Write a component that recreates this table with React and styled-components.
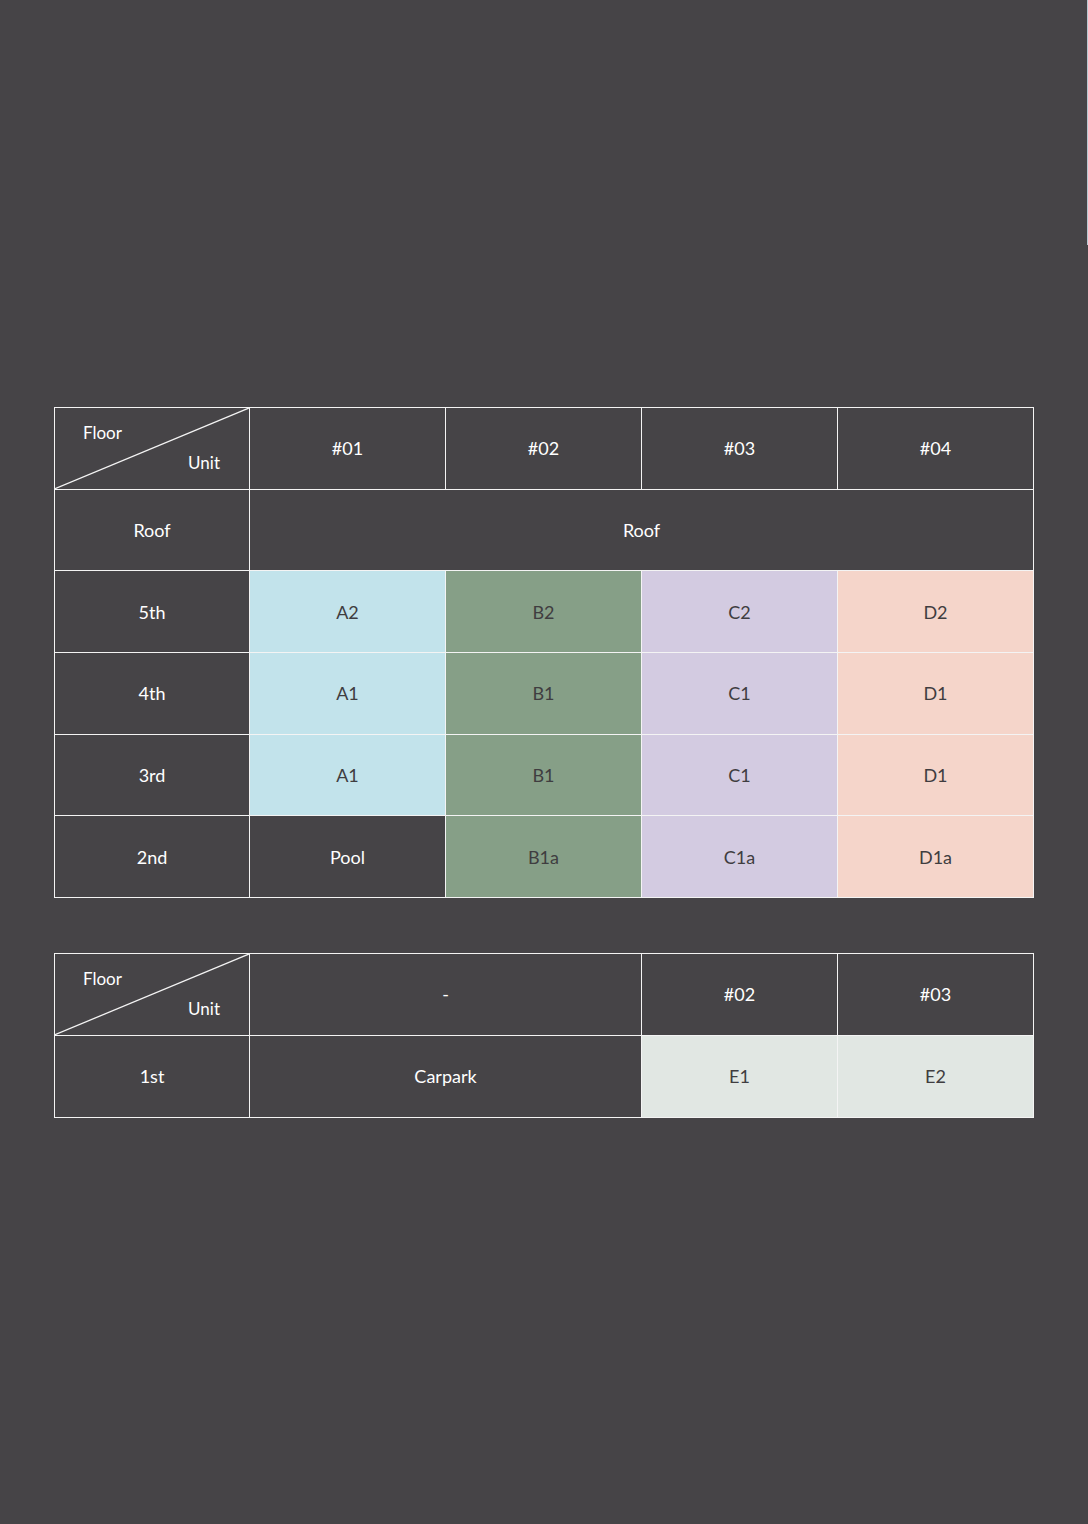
import styled, {createGlobalStyle} from "styled-components";

const colors = {
    bg: '#464447',
    line: '#f4f4f4',
    white: '#ffffff',
    ink: '#3f3d40',
    a: '#c2e3eb',
    b: '#869f87',
    c: '#d3cbe1',
    d: '#f5d5ca',
    e: '#e1e7e3',
}

const GlobalStyle = createGlobalStyle`
  html, body {
    margin: 0;
    padding: 0;
    background: ${colors.bg};
  }
  body {
    font-family: Lato, "Open Sans", sans-serif;
  }
`

const Page = styled.div`
  position: relative;
  min-height: 1524px;
  padding: 407px 54px 0 54px;
  box-sizing: border-box;
  background: ${colors.bg};
`

const EdgeLine = styled.div`
  position: absolute;
  top: 0;
  right: 0;
  width: 1px;
  height: 245px;
  background: #b9c9d2;
`

const Table = styled.table`
  width: 980px;
  border-collapse: collapse;
  table-layout: fixed;
  margin-bottom: ${p => p.$gap || 0}px;
`

const FirstCol = styled.col`
  width: 195px;
`

const Cell = styled.td`
  height: 80.7px;
  padding: 0;
  border: 1px solid ${colors.line};
  text-align: center;
  vertical-align: middle;
  font-size: 18px;
  color: ${p => p.$tone ? colors.ink : colors.white};
  background: ${p => p.$tone ? colors[p.$tone] : 'transparent'};
`

const CornerCell = styled.td`
  position: relative;
  height: 80.7px;
  padding: 0;
  border: 1px solid ${colors.line};
  font-size: 17px;
  color: ${colors.white};
`

const Diagonal = styled.svg`
  position: absolute;
  inset: 0;
  width: 100%;
  height: 100%;
`

const FloorLabel = styled.span`
  position: absolute;
  left: 28px;
  top: 14px;
`

const UnitLabel = styled.span`
  position: absolute;
  right: 29px;
  bottom: 16px;
`

const Corner = () => (
    <CornerCell>
        <Diagonal viewBox="0 0 100 100" preserveAspectRatio="none">
            <line x1="0" y1="100" x2="100" y2="0" stroke={colors.line} strokeWidth="1.3" vectorEffect="non-scaling-stroke"/>
        </Diagonal>
        <FloorLabel>Floor</FloorLabel>
        <UnitLabel>Unit</UnitLabel>
    </CornerCell>
)

const upperFloors = [
    {floor: '5th', units: [['A2', 'a'], ['B2', 'b'], ['C2', 'c'], ['D2', 'd']]},
    {floor: '4th', units: [['A1', 'a'], ['B1', 'b'], ['C1', 'c'], ['D1', 'd']]},
    {floor: '3rd', units: [['A1', 'a'], ['B1', 'b'], ['C1', 'c'], ['D1', 'd']]},
    {floor: '2nd', units: [['Pool', null], ['B1a', 'b'], ['C1a', 'c'], ['D1a', 'd']]},
]

const App = () => {
    return (
        <Page>
            <GlobalStyle/>
            <EdgeLine/>
            <Table $gap={55}>
                <colgroup>
                    <FirstCol/>
                    <col/><col/><col/><col/>
                </colgroup>
                <tbody>
                <tr>
                    <Corner/>
                    {['#01', '#02', '#03', '#04'].map(u => <Cell key={u}>{u}</Cell>)}
                </tr>
                <tr>
                    <Cell>Roof</Cell>
                    <Cell colSpan={4}>Roof</Cell>
                </tr>
                {upperFloors.map(row => (
                    <tr key={row.floor}>
                        <Cell>{row.floor}</Cell>
                        {row.units.map(([name, tone], i) => (
                            <Cell key={i} $tone={tone}>{name}</Cell>
                        ))}
                    </tr>
                ))}
                </tbody>
            </Table>
            <Table>
                <colgroup>
                    <FirstCol/>
                    <col/><col/><col/><col/>
                </colgroup>
                <tbody>
                <tr>
                    <Corner/>
                    <Cell colSpan={2}>-</Cell>
                    <Cell>#02</Cell>
                    <Cell>#03</Cell>
                </tr>
                <tr>
                    <Cell>1st</Cell>
                    <Cell colSpan={2}>Carpark</Cell>
                    <Cell $tone="e">E1</Cell>
                    <Cell $tone="e">E2</Cell>
                </tr>
                </tbody>
            </Table>
        </Page>
    )
}

export default App
